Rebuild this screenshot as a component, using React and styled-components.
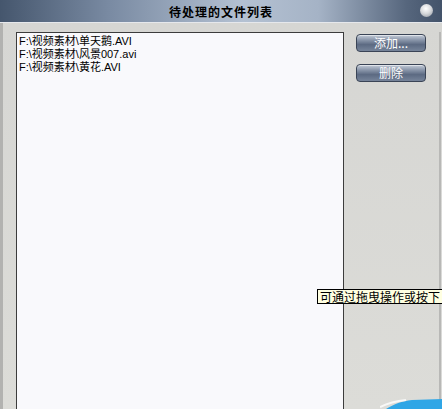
import React from 'react';
import styled, { createGlobalStyle } from 'styled-components';

const Global = createGlobalStyle`
  html, body { margin: 0; padding: 0; background: #dadad6; }
  body { font-family: "Liberation Sans", "Noto Sans CJK SC", sans-serif; }
`;

const Window = styled.div`
  position: relative;
  width: 442px;
  height: 409px;
  overflow: hidden;
  display: flex;
  flex-direction: column;
  background: #dadad6;
`;

const TitleBar = styled.div`
  height: 22px;
  flex-shrink: 0;
  display: flex;
  align-items: center;
  justify-content: center;
  position: relative;
  background: linear-gradient(90deg, #45566d 0%, #7a8ba3 25%, #b4c1d2 55%, #a5b3c6 72%, #56667d 92%, #43536a 100%);
  border-bottom: 1px solid #e6e8ec;
  font-family: "Noto Sans CJK SC", sans-serif;
  font-weight: 700;
  font-size: 12px;
  color: #000;
  letter-spacing: 1px;
`;

const Knob = styled.span`
  position: absolute;
  right: 9px;
  top: 4px;
  width: 13px;
  height: 13px;
  border-radius: 50%;
  background: radial-gradient(circle at 45% 35%, #ffffff 0%, #d8dadd 45%, #8b929c 100%);
`;

const Body = styled.div`
  flex: 1;
  display: flex;
  border-left: 3px solid #b2b2b0;
  padding: 9px 0 0 13px;
  background: linear-gradient(180deg, #d6d6d3, #dcdcd8);
`;

const ListBox = styled.div`
  width: 324px;
  border: 1px solid #3c3c3c;
  border-bottom: none;
  background: #f9f9fc;
  padding: 2px 0 0 2px;
  font-size: 11px;
  line-height: 13px;
  color: #000;
`;

const Item = styled.div`
  white-space: nowrap;
`;

const Side = styled.div`
  width: 83px;
  padding: 2px 0 0 12px;
  display: flex;
  flex-direction: column;
  gap: 12px;
  border-right: 2px solid #b8b8b6;
`;

const Button = styled.button`
  width: 70px;
  height: 18px;
  padding: 0;
  border: 1px solid #3a4456;
  border-radius: 4px;
  background: linear-gradient(180deg, #c4ccd8 0%, #8c98ac 30%, #5c6a82 60%, #76849a 100%);
  color: #fff;
  font-family: "Noto Sans CJK SC", sans-serif;
  font-size: 12px;
  line-height: 16px;
  box-shadow: inset 0 1px 0 rgba(255, 255, 255, 0.5);
`;

const Edge = styled.div`
  flex: 1;
  background: linear-gradient(90deg, #cfcfcd, #e4e4e2);
`;

const Tooltip = styled.div`
  position: absolute;
  left: 317px;
  right: 0;
  top: 289px;
  height: 13px;
  padding: 0 0 0 2px;
  border: 1px solid #000;
  border-right: none;
  background: #ffffe1;
  color: #000;
  font-family: "Noto Sans CJK SC", sans-serif;
  font-size: 12px;
  line-height: 13px;
  white-space: nowrap;
  overflow: hidden;
`;

const Swoosh = styled.svg`
  position: absolute;
  right: 0;
  bottom: 0;
`;

const files = [
  'F:\\视频素材\\单天鹅.AVI',
  'F:\\视频素材\\风景007.avi',
  'F:\\视频素材\\黄花.AVI',
];

export default function App() {
  return (
    <>
      <Global />
      <Window>
        <TitleBar>
          待处理的文件列表
          <Knob />
        </TitleBar>
        <Body>
          <ListBox>
            {files.map((f) => (
              <Item key={f}>{f}</Item>
            ))}
          </ListBox>
          <Side>
            <Button>添加...</Button>
            <Button>删除</Button>
          </Side>
          <Edge />
        </Body>
        <Tooltip>可通过拖曳操作或按下</Tooltip>
        <Swoosh width="62" height="12" viewBox="0 0 62 12">
          <path d="M6 12 C14 7 22 4 32 3 L62 2 L62 12 Z" fill="#2fa6e6" />
          <path d="M0 10 C8 6 16 4 26 3" stroke="#ffffff" strokeWidth="2" fill="none" opacity="0.8" />
        </Swoosh>
      </Window>
    </>
  );
}
